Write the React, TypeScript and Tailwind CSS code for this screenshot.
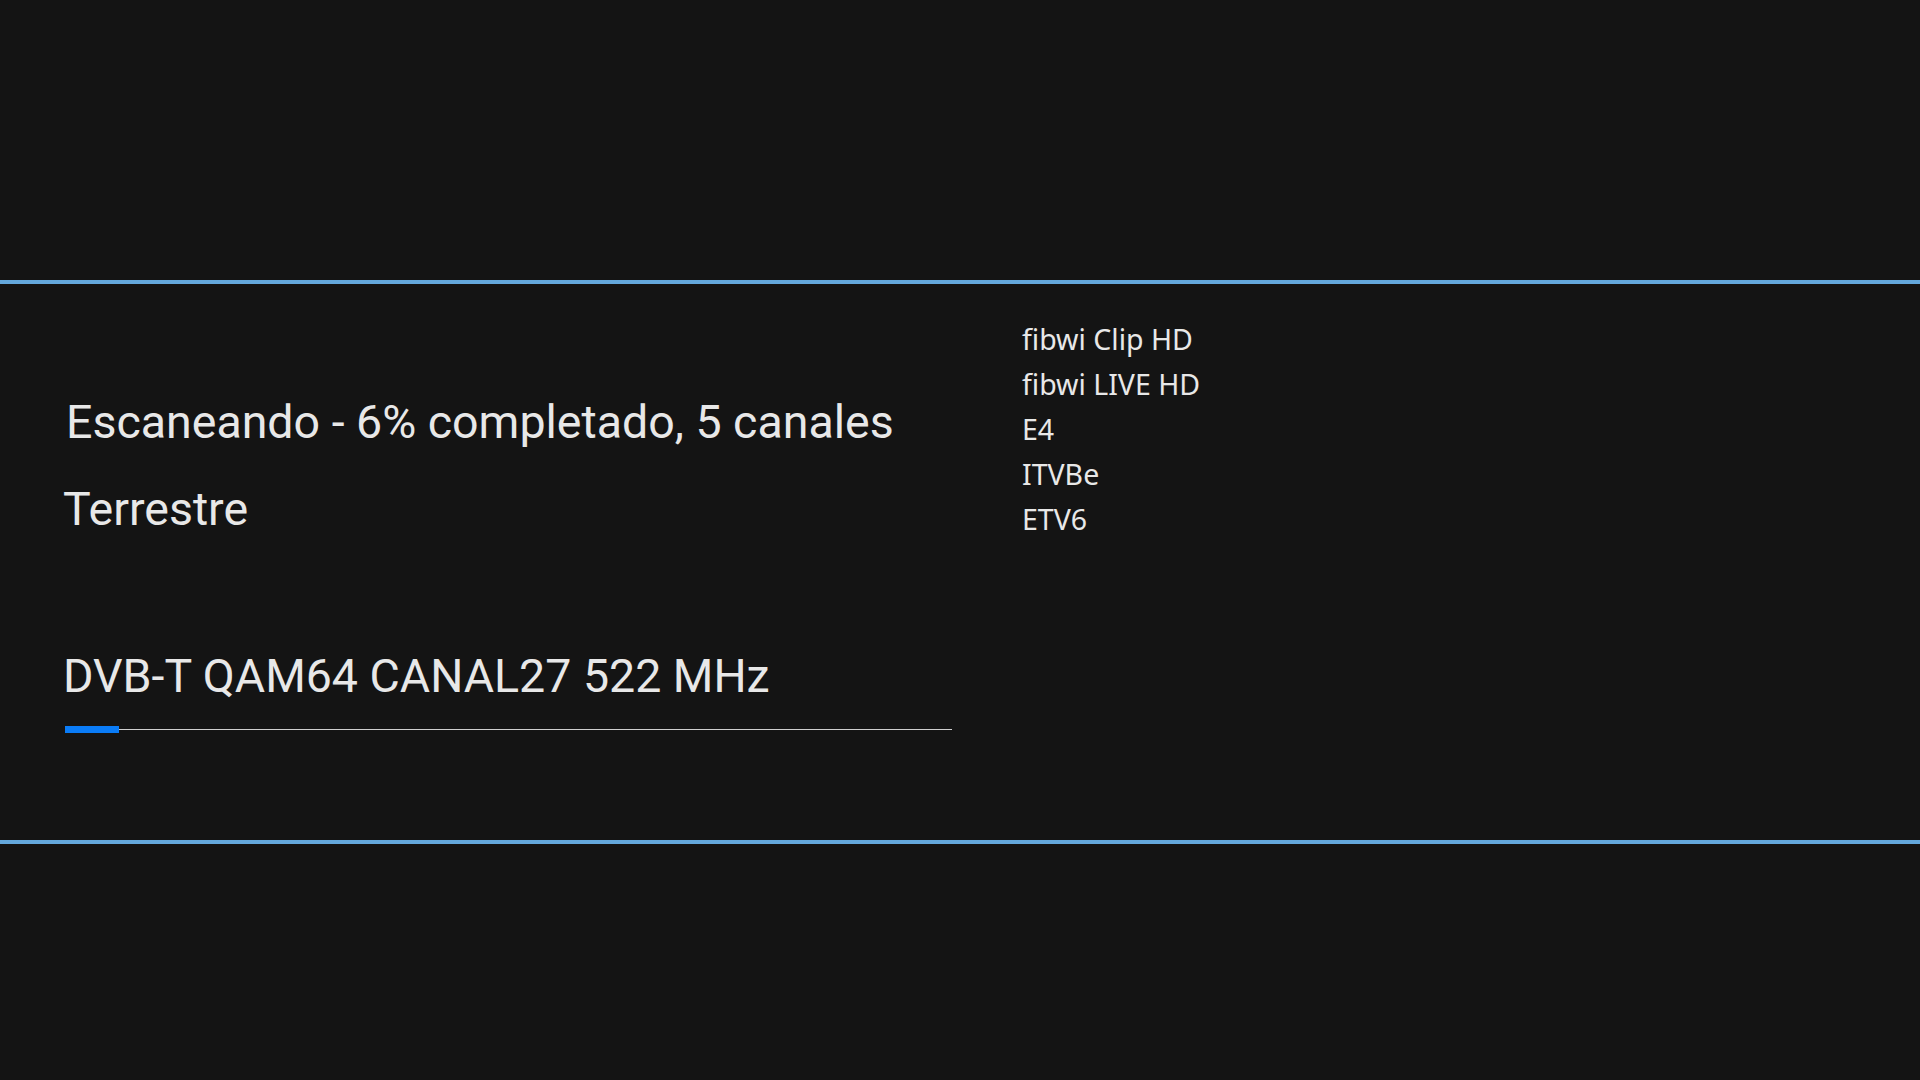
import React from 'react';

const channels = ['fibwi Clip HD', 'fibwi LIVE HD', 'E4', 'ITVBe', 'ETV6'];

const App: React.FC = () => {
  return (
    <div className="h-screen w-full bg-[#141414] flex flex-col overflow-hidden text-[#e8e8e8]">
      {/* top spacer */}
      <div className="h-[280px] shrink-0" />
      <div className="h-[4px] w-full bg-[#64a8dc] shrink-0" />

      {/* scan panel */}
      <section className="h-[556px] shrink-0 flex">
        <div className="w-[952px] pl-[63px] pt-[112px] flex flex-col font-['Roboto',sans-serif]">
          <h1 className="ml-[3px] text-[46.5px] leading-[53px] font-normal">
            Escaneando - 6% completado, 5 canales
          </h1>
          <h2 className="mt-[34px] text-[46.5px] leading-[53px] font-normal">Terrestre</h2>
          <p className="mt-[114px] text-[46.5px] leading-[53px]">DVB-T QAM64 CANAL27 522 MHz</p>
          <div className="mt-[23px] ml-[2px] h-[7px] flex items-center">
            <div className="w-[54px] h-[7px] bg-[#0a7cf7]" />
            <div className="flex-1 h-px bg-[#cfcfcf]" />
          </div>
        </div>

        <ul className="ml-[70px] pt-[33px] font-['Noto_Sans',sans-serif] text-[28.5px] leading-[45px]">
          {channels.map((c) => (
            <li key={c}>{c}</li>
          ))}
        </ul>
      </section>

      <div className="h-[4px] w-full bg-[#64a8dc] shrink-0" />
      <div className="flex-1" />
    </div>
  );
};

export default App;
